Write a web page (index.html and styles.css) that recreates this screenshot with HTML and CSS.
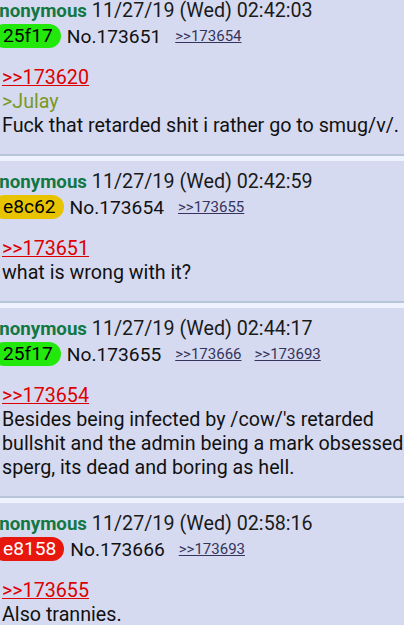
FILE: index.html
```html
<!DOCTYPE html>
<html lang="en">
<head>
  <meta charset="UTF-8" />
  <meta name="viewport" content="width=device-width, initial-scale=1.0"/>
  <title>Thread</title>
  <link rel="stylesheet" href="styles.css">
</head>
<body>
  <div class="thread">

    <div class="post">
      <div class="post-info">
        <span class="name">Anonymous</span>
        <span class="date">11/27/19 (Wed) 02:42:03</span>
      </div>
      <div class="post-id">
        <span class="poster-id id-green">25f17</span>
        <span class="post-num">No.173651</span>
        <span class="backlinks">
          <a href="#p173654">&gt;&gt;173654</a>
        </span>
      </div>
      <blockquote class="message">
        <a class="quotelink" href="#p173620">&gt;&gt;173620</a><br>
        <span class="greentext">&gt;Julay</span><br>
        Fuck that retarded shit i rather go to smug/v/.
      </blockquote>
    </div>

    <div class="post">
      <div class="post-info">
        <span class="name">Anonymous</span>
        <span class="date">11/27/19 (Wed) 02:42:59</span>
      </div>
      <div class="post-id">
        <span class="poster-id id-yellow">e8c62</span>
        <span class="post-num">No.173654</span>
        <span class="backlinks">
          <a href="#p173655">&gt;&gt;173655</a>
        </span>
      </div>
      <blockquote class="message">
        <a class="quotelink" href="#p173651">&gt;&gt;173651</a><br>
        what is wrong with it?
      </blockquote>
    </div>

    <div class="post">
      <div class="post-info">
        <span class="name">Anonymous</span>
        <span class="date">11/27/19 (Wed) 02:44:17</span>
      </div>
      <div class="post-id">
        <span class="poster-id id-green">25f17</span>
        <span class="post-num">No.173655</span>
        <span class="backlinks">
          <a href="#p173666">&gt;&gt;173666</a>
          <a href="#p173693">&gt;&gt;173693</a>
        </span>
      </div>
      <blockquote class="message">
        <a class="quotelink" href="#p173654">&gt;&gt;173654</a><br>
        Besides being infected by /cow/'s retarded bullshit and the admin being a mark obsessed sperg, its dead and boring as hell.
      </blockquote>
    </div>

    <div class="post">
      <div class="post-info">
        <span class="name">Anonymous</span>
        <span class="date">11/27/19 (Wed) 02:58:16</span>
      </div>
      <div class="post-id">
        <span class="poster-id id-red">e8158</span>
        <span class="post-num">No.173666</span>
        <span class="backlinks">
          <a href="#p173693">&gt;&gt;173693</a>
        </span>
      </div>
      <blockquote class="message">
        <a class="quotelink" href="#p173655">&gt;&gt;173655</a><br>
        Also trannies.
      </blockquote>
    </div>

  </div>
</body>
</html>
```

FILE: styles.css
```css
html, body {
  overflow: hidden;
}

body {
  font-family: Roboto, "Noto Sans", Arial, sans-serif;
  background: #eef2ff;
  color: #000;
  margin: 0;
}

.thread {
  margin-top: -10px;
}

.post {
  background: #d6daf0;
  border-bottom: 2px solid #b7c5d9;
  margin-bottom: 5px;
  padding: 9px 0 16px 2px;
}

.post-info {
  font-size: 19.7px;
  line-height: 24px;
  white-space: nowrap;
}

.name {
  color: #117743;
  font-weight: bold;
  font-size: 18.7px;
  margin-left: -15px;
}

.date {
  color: #1a1a1a;
}

.post-id {
  display: flex;
  align-items: center;
  gap: 6px;
  height: 24px;
  margin-top: 1px;
  font-size: 19.2px;
  white-space: nowrap;
}

.poster-id {
  display: inline-block;
  height: 24px;
  line-height: 24px;
  margin-left: -10px;
  padding: 0 8px 0 11px;
  border-radius: 12px;
}

.id-green {
  background: #22e80c;
  color: #000;
}

.id-yellow {
  background: #e8c400;
  color: #000;
}

.id-red {
  background: #e8170e;
  color: #fff;
}

.post-num {
  color: #111;
}

.backlinks {
  display: flex;
  gap: 13px;
  margin-left: 8px;
  font-size: 15px;
}

.backlinks a {
  color: #34345c;
}

.message {
  margin: 18px 0 0 0;
  width: 420px;
  font-size: 19.7px;
  line-height: 24px;
  color: #111;
}

.quotelink {
  color: #dd0000;
}

.greentext {
  color: #789922;
}
```
